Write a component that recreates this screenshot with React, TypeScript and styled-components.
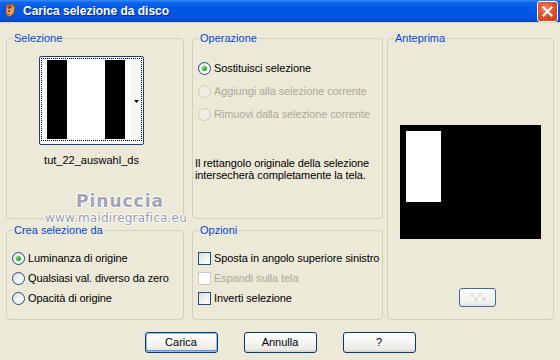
import styled, {createGlobalStyle} from "styled-components";

const GlobalStyle = createGlobalStyle`
	html, body {
		margin: 0;
		padding: 0;
		background: #ECE9D8;
	}
	body {
		font-family: "Liberation Sans", Arial, sans-serif;
		font-size: 11px;
		color: #000;
	}
`;

const Window = styled.div`
	width: 560px;
	height: 360px;
	overflow: hidden;
	background: #ECE9D8;
	display: flex;
	flex-direction: column;
`;

const TitleBar = styled.div`
	height: 22px;
	flex: none;
	display: flex;
	align-items: center;
	padding: 0 2px 0 3px;
	background: linear-gradient(to bottom, #3A8CF8 0%, #1269EE 10%, #0058E6 35%, #0055E3 70%, #0050D8 90%, #0040B8 100%);
	border-bottom: 1px solid #D8D4C4;
`;

const TitleText = styled.span`
	flex: 1;
	margin-left: 4px;
	color: #fff;
	font-family: "Liberation Sans", Arial, sans-serif;
	font-weight: bold;
	font-size: 12px;
	letter-spacing: 0;
	text-shadow: 1px 1px 0 #0A2A8A;
`;

const CloseButton = styled.div`
	width: 19px;
	height: 19px;
	border: 1px solid #fff;
	border-radius: 3px;
	background: radial-gradient(circle at 40% 35%, #F08A6A 0%, #E0522E 45%, #C23D1C 100%);
	display: flex;
	align-items: center;
	justify-content: center;
`;

const Body = styled.div`
	flex: 1;
	display: flex;
	flex-direction: column;
	padding-top: 15px;
`;

const Panels = styled.div`
	display: grid;
	margin-left: 6px;
	grid-template-columns: 178px 8px 191px 4px 167px;
	grid-template-rows: 181px 11px 90px;
`;

const Group = styled.div<{$col: number; $row: string}>`
	position: relative;
	grid-column: ${({$col}) => $col};
	grid-row: ${({$row}) => $row};
	border: 1px solid #D0D0BF;
	border-radius: 4px;
	display: flex;
	flex-direction: column;
	align-items: flex-start;
`;

const GroupLabel = styled.span`
	position: absolute;
	top: -7px;
	left: 6px;
	padding: 0 1px;
	line-height: 13px;
	background: #ECE9D8;
	color: #0046D5;
`;

const ThumbColumn = styled.div`
	margin: 17px 0 0 33px;
	width: 103px;
	display: flex;
	flex-direction: column;
	align-items: center;
`;

const ThumbFrame = styled.div`
	width: 101px;
	height: 85px;
	border: 1px solid #1C3F7A;
	border-radius: 2px;
	background: #fff;
	padding: 1px;
	box-sizing: content-box;
`;

const FocusRect = styled.div`
	height: 81px;
	border: 1px dotted #000;
	display: flex;
	align-items: center;
	background: #F6F6F4;
`;

const ArrowBox = styled.div`
	flex: 1;
	display: flex;
	justify-content: center;
`;

const Caption = styled.div`
	margin-top: 9px;
	line-height: 13px;
	white-space: nowrap;
`;

const Watermark = styled.div`
	position: absolute;
	left: 44px;
	top: 152px;
	width: 130px;
	display: flex;
	flex-direction: column;
	align-items: center;
	pointer-events: none;
	color: #A3A3B5;
	text-shadow: -1px 0 #fff, 1px 0 #fff, 0 -1px #fff, 0 1px #fff;
	font-family: "DejaVu Sans", sans-serif;
	font-weight: bold;
`;

const WatermarkName = styled.span`
	font-size: 17px;
	letter-spacing: 1px;
	line-height: 20px;
	margin-left: 8px;
`;

const WatermarkSite = styled.span`
	font-size: 12px;
	font-weight: normal;
	line-height: 12px;
	margin-top: 1px;
	letter-spacing: 0.2px;
	color: #9A9AAA;
`;

const OptionList = styled.div<{$top: number; $gap: number}>`
	margin: ${({$top}) => $top}px 0 0 5px;
	display: flex;
	flex-direction: column;
	gap: ${({$gap}) => $gap}px;
`;

const OptionRow = styled.label<{$disabled?: boolean}>`
	display: flex;
	align-items: center;
	gap: 3px;
	height: 13px;
	line-height: 13px;
	white-space: nowrap;
	letter-spacing: -0.1px;
	color: ${({$disabled}) => ($disabled ? "#ACA899" : "#000")};
`;

const Radio = styled.span<{$checked?: boolean; $disabled?: boolean}>`
	width: 11px;
	height: 11px;
	border-radius: 50%;
	flex: none;
	border: 1px solid ${({$disabled}) => ($disabled ? "#CDCABB" : "#1C5180")};
	background: ${({$disabled}) =>
		$disabled ? "#EFEDE2" : "linear-gradient(135deg, #DCDCD5 0%, #F4F4F0 55%, #FFFFFF 100%)"};
	display: flex;
	align-items: center;
	justify-content: center;
	&::after {
		content: "";
		display: ${({$checked}) => ($checked ? "block" : "none")};
		width: 5px;
		height: 5px;
		border-radius: 50%;
		background: radial-gradient(circle at 35% 35%, #7EE07E 0%, #2FB02F 50%, #1A8C1A 100%);
	}
`;

const Checkbox = styled.span<{$disabled?: boolean}>`
	width: 11px;
	height: 11px;
	flex: none;
	border: 1px solid ${({$disabled}) => ($disabled ? "#CDCABB" : "#1C5180")};
	background: ${({$disabled}) =>
		$disabled ? "#FFFFFF" : "linear-gradient(135deg, #DCDCD5 0%, #F2F2EE 55%, #FFFFFF 100%)"};
`;

const Description = styled.p`
	margin: 36px 0 0 2px;
	line-height: 12px;
	letter-spacing: -0.1px;
`;

const PreviewArea = styled.div`
	align-self: center;
	margin-top: 86px;
	width: 141px;
	height: 114px;
	background: #000;
	display: flex;
	padding: 6px;
	box-sizing: border-box;
`;

const PreviewWhite = styled.div`
	width: 35px;
	height: 71px;
	background: #fff;
`;

const SmallButton = styled.div`
	align-self: center;
	margin: 49px 0 0 14px;
	width: 35px;
	height: 17px;
	border: 1px solid #3C6AA8;
	border-radius: 3px;
	background: linear-gradient(to bottom, #FFFFFF 0%, #F5F5F2 60%, #E6E4DC 100%);
	display: flex;
	align-items: center;
	justify-content: center;
`;

const ButtonRow = styled.div`
	margin-top: 12px;
	display: flex;
	justify-content: center;
	gap: 26px;
`;

const Button = styled.div<{$default?: boolean}>`
	width: 71px;
	height: 19px;
	border: 1px solid #003C74;
	border-radius: 3px;
	background: linear-gradient(to bottom, #FFFFFF 0%, #F6F6F3 45%, #ECEBE6 85%, #D8D3C8 100%);
	box-shadow: ${({$default}) => ($default ? "inset 0 0 0 1px #9DBBEA, inset 0 -1px 0 1px #6C8FE0" : "none")};
	display: flex;
	align-items: center;
	justify-content: center;
	line-height: 13px;
`;

const AppIcon = () => (
	<svg width="16" height="16" viewBox="0 0 16 16">
		<path d="M3 2 L9 1 L12 4 L11 10 L7 14 L3 12 Z" fill="#E8A060" stroke="#7A3A10" strokeWidth="0.8" />
		<path d="M4 3 L8 2 L9 5 L5 6 Z" fill="#C03020" />
		<circle cx="6" cy="8" r="1" fill="#1A3A90" />
		<path d="M10 1 L14 5 L13 6 L9 2 Z" fill="#2E7D32" />
		<path d="M4 11 L7 12" stroke="#7A3A10" strokeWidth="0.8" />
	</svg>
);

const CloseX = () => (
	<svg width="11" height="11" viewBox="0 0 11 11">
		<path d="M1.5 1.5 L9.5 9.5 M9.5 1.5 L1.5 9.5" stroke="#fff" strokeWidth="2" strokeLinecap="square" />
	</svg>
);

const StripeImage = () => (
	<svg width="84" height="79" viewBox="0 0 84 79" style={{marginLeft: 5, flex: "none"}}>
		<rect x="0" y="0" width="84" height="79" fill="#fff" />
		<rect x="0" y="0" width="20" height="79" fill="#000" />
		<rect x="58" y="0" width="20" height="79" fill="#000" />
	</svg>
);

const DropArrow = () => (
	<svg width="5" height="3" viewBox="0 0 5 3" style={{marginTop: 4}}>
		<path d="M0 0 H5 L2.5 3 Z" fill="#000" />
	</svg>
);

const CheckerIcon = () => (
	<svg width="20" height="11" viewBox="0 0 20 11">
		<rect x="2" y="1" width="4" height="4" fill="#E4E4E4" />
		<rect x="10" y="1" width="4" height="4" fill="#E4E4E4" />
		<rect x="6" y="5" width="4" height="4" fill="#E0E0E0" />
		<rect x="14" y="5" width="4" height="4" fill="#E0E0E0" />
	</svg>
);

const operazioni = [
	{label: "Sostituisci selezione", checked: true, disabled: false},
	{label: "Aggiungi alla selezione corrente", checked: false, disabled: true},
	{label: "Rimuovi dalla selezione corrente", checked: false, disabled: true},
];

const origini = [
	{label: "Luminanza di origine", checked: true},
	{label: "Qualsiasi val. diverso da zero", checked: false},
	{label: "Opacità di origine", checked: false},
];

const opzioni = [
	{label: "Sposta in angolo superiore sinistro", disabled: false},
	{label: "Espandi sulla tela", disabled: true},
	{label: "Inverti selezione", disabled: false},
];

const App = () => {
	return (
		<>
			<GlobalStyle />
			<Window>
				<TitleBar>
					<AppIcon />
					<TitleText>Carica selezione da disco</TitleText>
					<CloseButton>
						<CloseX />
					</CloseButton>
				</TitleBar>
				<Body>
					<Panels>
						<Group $col={1} $row="1">
							<GroupLabel>Selezione</GroupLabel>
							<ThumbColumn>
								<ThumbFrame>
									<FocusRect>
										<StripeImage />
										<ArrowBox>
											<DropArrow />
										</ArrowBox>
									</FocusRect>
								</ThumbFrame>
								<Caption>tut_22_auswahl_ds</Caption>
							</ThumbColumn>
							<Watermark>
								<WatermarkName>Pinuccia</WatermarkName>
								<WatermarkSite>www.maidiregrafica.eu</WatermarkSite>
							</Watermark>
						</Group>
						<Group $col={3} $row="1">
							<GroupLabel>Operazione</GroupLabel>
							<OptionList $top={23} $gap={10}>
								{operazioni.map((item) => (
									<OptionRow key={item.label} $disabled={item.disabled}>
										<Radio $checked={item.checked} $disabled={item.disabled} />
										{item.label}
									</OptionRow>
								))}
							</OptionList>
							<Description>
								Il rettangolo originale della selezione
								<br />
								intersecherà completamente la tela.
							</Description>
						</Group>
						<Group $col={5} $row="1 / 4">
							<GroupLabel>Anteprima</GroupLabel>
							<PreviewArea>
								<PreviewWhite />
							</PreviewArea>
							<SmallButton>
								<CheckerIcon />
							</SmallButton>
						</Group>
						<Group $col={1} $row="3">
							<GroupLabel>Crea selezione da</GroupLabel>
							<OptionList $top={21} $gap={7}>
								{origini.map((item) => (
									<OptionRow key={item.label}>
										<Radio $checked={item.checked} />
										{item.label}
									</OptionRow>
								))}
							</OptionList>
						</Group>
						<Group $col={3} $row="3">
							<GroupLabel>Opzioni</GroupLabel>
							<OptionList $top={21} $gap={7}>
								{opzioni.map((item) => (
									<OptionRow key={item.label} $disabled={item.disabled}>
										<Checkbox $disabled={item.disabled} />
										{item.label}
									</OptionRow>
								))}
							</OptionList>
						</Group>
					</Panels>
					<ButtonRow>
						<Button $default>Carica</Button>
						<Button>Annulla</Button>
						<Button>?</Button>
					</ButtonRow>
				</Body>
			</Window>
		</>
	);
};

export default App;
